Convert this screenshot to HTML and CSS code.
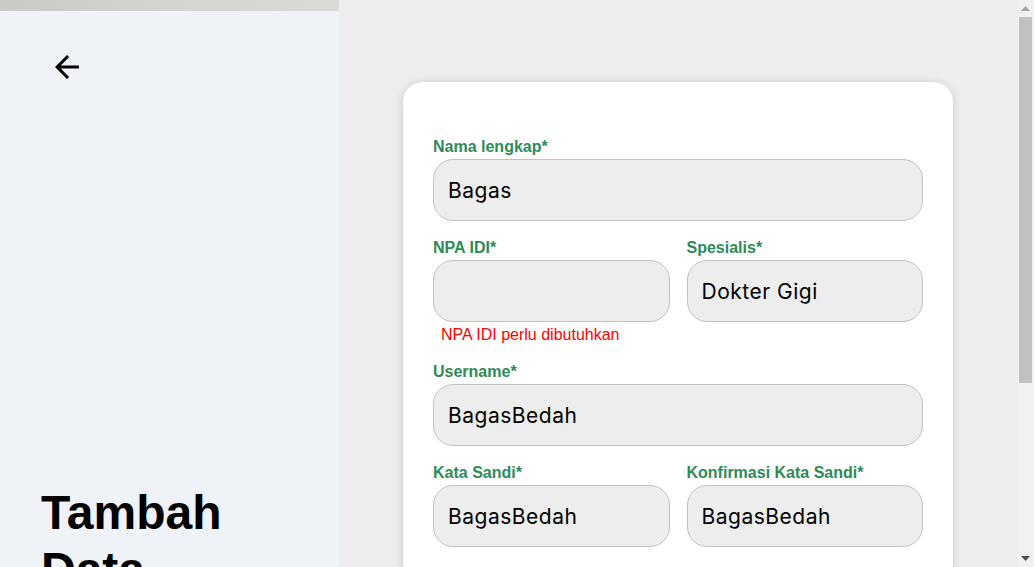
FILE: index.html
```html
<!DOCTYPE html>
<html lang="id">
<head>
<meta charset="utf-8">
<title>Tambah Data Dokter</title>
<link rel="stylesheet" href="styles.css">
</head>
<body>
<div class="page">
  <aside class="side">
    <div class="side-banner"></div>
    <div class="side-inner">
      <button class="back" type="button" aria-label="Kembali">
        <svg viewBox="0 0 24 24" width="36" height="36"><path d="M20 11H7.83l5.59-5.59L12 4l-8 8 8 8 1.41-1.41L7.83 13H20v-2z" fill="#000"/></svg>
      </button>
      <h1 class="title">Tambah Data Dokter</h1>
    </div>
  </aside>
  <main class="main">
    <form class="card">
      <div class="field">
        <label class="label">Nama lengkap*</label>
        <input class="input" type="text" value="Bagas">
      </div>
      <div class="row">
        <div class="field">
          <label class="label">NPA IDI*</label>
          <input class="input" type="text" value="">
          <div class="error">NPA IDI perlu dibutuhkan</div>
        </div>
        <div class="field">
          <label class="label">Spesialis*</label>
          <input class="input" type="text" value="Dokter Gigi">
        </div>
      </div>
      <div class="field">
        <label class="label">Username*</label>
        <input class="input" type="text" value="BagasBedah">
      </div>
      <div class="row">
        <div class="field">
          <label class="label">Kata Sandi*</label>
          <input class="input" type="text" value="BagasBedah">
        </div>
        <div class="field">
          <label class="label">Konfirmasi Kata Sandi*</label>
          <input class="input" type="text" value="BagasBedah">
        </div>
      </div>
    </form>
  </main>
</div>
<div class="scrollbar" aria-hidden="true">
  <div class="sb-btn">
    <svg width="9" height="5" viewBox="0 0 9 5"><path d="M0 5L4.5 0L9 5z" fill="#a3a3a3"/></svg>
  </div>
  <div class="sb-track">
    <div class="sb-thumb"></div>
  </div>
  <div class="sb-btn">
    <svg width="9" height="5" viewBox="0 0 9 5"><path d="M0 0L4.5 5L9 0z" fill="#505050"/></svg>
  </div>
</div>
</body>
</html>
```
FILE: styles.css
```css
html, body {
  margin: 0;
  padding: 0;
}
body {
  font-family: "Liberation Sans", Arial, sans-serif;
  background: #ededed;
  color: #000;
  padding-right: 17px;
}
.page {
  display: flex;
  min-height: 823px;
}
.side {
  width: 339px;
  flex: 0 0 339px;
  background: #eff2f7;
  display: flex;
  flex-direction: column;
}
.side-banner {
  height: 11px;
  background: linear-gradient(90deg, #c9cac3 0%, #d3d5ce 50%, #d8dcd5 100%);
}
.side-inner {
  padding: 38px 41px 0 41px;
}
.back {
  display: block;
  margin: 0 0 0 8px;
  padding: 0;
  border: 0;
  background: transparent;
  width: 36px;
  height: 36px;
  cursor: pointer;
}
.back svg {
  display: block;
}
.title {
  margin: 399px 0 0 0;
  font-family: "Liberation Sans", Arial, sans-serif;
  font-weight: 700;
  font-size: 48px;
  line-height: 57px;
  color: #000;
}
.main {
  flex: 1;
  display: flex;
  justify-content: center;
  align-items: flex-start;
  padding: 82px 0 60px;
}
.card {
  width: 550px;
  box-sizing: border-box;
  min-height: 681px;
  background: #fff;
  border-radius: 20px;
  box-shadow: 0 1px 8px rgba(0, 0, 0, 0.16);
  padding: 56px 30px 40px;
  display: flex;
  flex-direction: column;
  gap: 18px;
}
.row {
  display: grid;
  grid-template-columns: 1fr 1fr;
  column-gap: 17px;
}
.field {
  display: flex;
  flex-direction: column;
}
.label {
  font-family: "Liberation Sans", Arial, sans-serif;
  font-weight: 700;
  font-size: 16px;
  line-height: 17px;
  color: #2e8b57;
  margin-bottom: 4px;
}
.input {
  box-sizing: border-box;
  height: 62px;
  width: 100%;
  border: 1px solid #c2c2c2;
  border-radius: 20px;
  background: #ededed;
  padding: 0 14px;
  font-family: Inter, "Noto Sans", sans-serif;
  font-size: 21px;
  letter-spacing: 0.5px;
  color: #000;
  outline: none;
}
.error {
  font-family: "Liberation Sans", Arial, sans-serif;
  font-size: 16px;
  line-height: 17px;
  color: #ff0000;
  padding-left: 8px;
  margin-top: 4px;
  margin-bottom: 2px;
}
.scrollbar {
  position: fixed;
  top: 0;
  right: 0;
  width: 17px;
  height: 100vh;
  background: #f1f1f1;
  display: flex;
  flex-direction: column;
}
.sb-btn {
  height: 17px;
  flex: 0 0 17px;
  display: flex;
  align-items: center;
  justify-content: center;
}
.sb-btn svg {
  display: block;
}
.sb-track {
  flex: 1;
  padding: 0 2px;
}
.sb-thumb {
  height: 366px;
  background: #c1c1c1;
}
```
